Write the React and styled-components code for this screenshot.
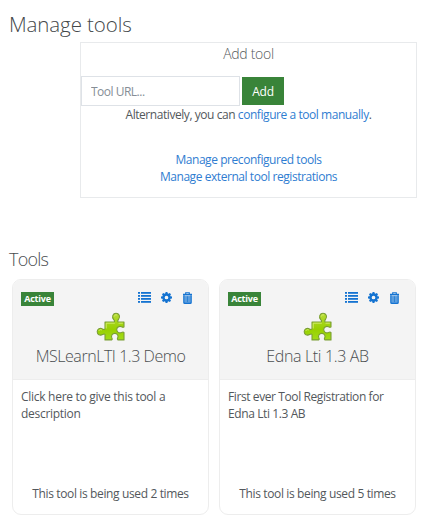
import React from "react";
import styled, { createGlobalStyle } from "styled-components";

const Global = createGlobalStyle`
  * { box-sizing: border-box; }
  body {
    margin: 0;
    background: #fff;
    color: #53585c;
    font-family: "Open Sans", "Noto Sans", sans-serif;
    font-size: 12px;
    line-height: 17px;
    letter-spacing: -0.44px;
  }
`;

const Page = styled.main`
  width: 441px;
  height: 521px;
  padding: 9px 0 0 9px;
  overflow: hidden;
`;

const Title = styled.h1`
  margin: 0;
  height: 33px;
  font-size: 20.5px;
  font-weight: 300;
  line-height: 30px;
  letter-spacing: -0.1px;
  color: #44484a;
`;

const AddPanel = styled.section`
  width: 337px;
  height: 156px;
  margin-left: 71px;
  border: 1px solid #e8eaec;
  text-align: center;
`;

const PanelTitle = styled.h2`
  margin: 0;
  height: 33px;
  font-size: 14px;
  font-weight: 300;
  line-height: 22px;
  letter-spacing: -0.3px;
  color: #55595b;
`;

const AddForm = styled.form`
  display: flex;
  align-items: center;
  gap: 2px;
  height: 30px;
`;

const UrlInput = styled.input`
  width: 159px;
  height: 30px;
  padding: 0 9px;
  border: 1px solid #dee2e7;
  border-radius: 0;
  background: #fff;
  font: inherit;
  letter-spacing: -0.5px;
  &::placeholder { color: #868e96; opacity: 1; }
`;

const AddButton = styled.button`
  width: 42px;
  height: 28px;
  padding: 0;
  border: 0;
  background: #398439;
  color: #fff;
  font: inherit;
  letter-spacing: -0.2px;
`;

const Alternative = styled.p`
  margin: 0 0 28px;
`;

const Link = styled.a`
  color: #2f7dd1;
  text-decoration: none;
`;

const Links = styled.nav`
  display: flex;
  flex-direction: column;
  align-items: center;
`;

const ToolsTitle = styled.h2`
  margin: 49px 0 0;
  height: 32px;
  font-size: 18px;
  font-weight: 300;
  line-height: 25px;
  letter-spacing: -0.8px;
  color: #4a4e50;
`;

const Cards = styled.div`
  display: flex;
  gap: 10px;
  padding-left: 3px;
`;

const Card = styled.article`
  display: flex;
  flex-direction: column;
  width: 197px;
  height: 236px;
  border: 1px solid #ededed;
  border-radius: 9px;
  overflow: hidden;
`;

const CardHeader = styled.header`
  height: 100px;
  padding: 8px 15px 0 8px;
  background: #f4f4f4;
  border-bottom: 1px solid #ededed;
`;

const Toolbar = styled.div`
  display: flex;
  align-items: center;
  justify-content: space-between;
  height: 19px;
`;

const Status = styled.span`
  width: 33px;
  height: 14px;
  margin-top: 2px;
  background: #398439;
  color: #fff;
  font-size: 9px;
  font-weight: 700;
  line-height: 14px;
  letter-spacing: -0.25px;
  text-align: center;
`;

const Actions = styled.div`
  display: flex;
  align-items: center;
  gap: 10px;
  color: #1473d1;
  svg { display: block; }
`;

const ToolIcon = styled.div`
  display: flex;
  justify-content: center;
  height: 34px;
  padding: 5px 0 0 7px;
`;

const ToolName = styled.h3`
  margin: 0 -7px 0 0;
  font-size: 16px;
  font-weight: 300;
  line-height: 30px;
  letter-spacing: ${(p) => p.$spacing};
  text-align: center;
  white-space: nowrap;
  color: #4a4e50;
`;

const Description = styled.p`
  flex: 1;
  margin: 0;
  padding: 8px 28px 0 8px;
  letter-spacing: ${(p) => p.$spacing};
`;

const Usage = styled.footer`
  height: 29px;
  text-align: center;
  letter-spacing: -0.37px;
`;

const ListIcon = () => (
  <svg width="13" height="11" viewBox="0 0 13 11" fill="currentColor">
    {[0, 3, 6, 9].map((y) => (
      <g key={y}>
        <rect x="0" y={y} width="2" height="1.8" />
        <rect x="3" y={y} width="10" height="1.8" />
      </g>
    ))}
  </svg>
);

const GearIcon = () => (
  <svg width="11" height="11" viewBox="0 0 11 11">
    <circle cx="5.5" cy="5.5" r="3" fill="none" stroke="currentColor" strokeWidth="2.3" />
    {[0, 45, 90, 135, 180, 225, 270, 315].map((angle) => (
      <path key={angle} d="M4.2 2 4.600 0h1.800l.4 2z" fill="currentColor" transform={`rotate(${angle} 5.5 5.5)`} />
    ))}
  </svg>
);

const TrashIcon = () => (
  <svg width="11" height="12" viewBox="0 0 11 12" fill="none" stroke="currentColor">
    <path d="M3.7 2V.8h3.600V2" strokeWidth="1.1" />
    <path d="M1 2.500h9" strokeWidth="1.500" />
    <path d="M1.900 3.200v7.200c0 .6.3.9.8.9h5.600c.5 0 .8-.3.8-.9V3.200" fill="#8bb9e6" strokeWidth="1.400" />
    <path d="M4 4.200v6M5.500 4.200v6M7 4.200v6" strokeWidth=".8" />
  </svg>
);

const PuzzleIcon = () => (
  <svg width="30" height="29" viewBox="0 0 30 29">
    <defs>
      <linearGradient id="puzzle" x1="0" y1="0" x2="0" y2="1">
        <stop offset="0" stopColor="#b7dc38" />
        <stop offset=".6" stopColor="#98d000" />
        <stop offset="1" stopColor="#a2dc18" />
      </linearGradient>
    </defs>
    <path
      d="M9 10h9c1-.7.5-1.500-.3-2.400C15.400 4.800 17 1.300 20 1.300s4.800 3.400 2.500 6.100c-.7.9-1.200 1.900-.3 2.600H28v4.800c-.6.8-1.500.4-2.500-.1-2.500-1-4.800.6-4.800 2.900s2.300 4.100 4.800 2.900c1-.6 1.900-.8 2.500.1v7.300h-6.200c-.8-.6-.6-1.200-.1-2 1.100-2.300-.6-4.500-2.900-4.500s-4.100 2.200-2.900 4.500c.5.9.7 1.400-.1 2H9v-5.400c-.6-1-1.400-.5-2.400.1C4 24 1.200 22.500 1.200 19.800s2.700-4.300 5.300-2.800c1.100.7 2 .8 2.500-.2z"
      fill="url(#puzzle)"
      stroke="#7a9e34"
      strokeWidth="1.100"
      strokeLinejoin="round"
    />
    <path d="M10.200 16.500v-5.300h8.600M18.200 4.500c.3-1.300 1.600-2 2.700-1.500M22.500 11.200h4.300M2.700 19c.5-1.300 1.900-1.700 3.200-1" fill="none" stroke="#d4ec70" strokeWidth=".9" />
  </svg>
);

const tools = [
  { name: "MSLearnLTI 1.3 Demo", spacing: "-0.45px", textSpacing: "-0.28px", description: "Click here to give this tool a description", uses: 2 },
  { name: "Edna Lti 1.3 AB", spacing: "-0.35px", textSpacing: "-0.4px", description: "First ever Tool Registration for Edna Lti 1.3 AB", uses: 5 },
];

export default function App() {
  return (
    <>
      <Global />
      <Page>
        <Title>Manage tools</Title>
        <AddPanel>
          <PanelTitle>Add tool</PanelTitle>
          <AddForm>
            <UrlInput placeholder="Tool URL..." aria-label="Tool URL" />
            <AddButton type="button">Add</AddButton>
          </AddForm>
          <Alternative>
            Alternatively, you can <Link href="#">configure a tool manually</Link>.
          </Alternative>
          <Links>
            <Link href="#">Manage preconfigured tools</Link>
            <Link href="#">Manage external tool registrations</Link>
          </Links>
        </AddPanel>
        <ToolsTitle>Tools</ToolsTitle>
        <Cards>
          {tools.map((tool) => (
            <Card key={tool.name}>
              <CardHeader>
                <Toolbar>
                  <Status>Active</Status>
                  <Actions>
                    <ListIcon />
                    <GearIcon />
                    <TrashIcon />
                  </Actions>
                </Toolbar>
                <ToolIcon>
                  <PuzzleIcon />
                </ToolIcon>
                <ToolName $spacing={tool.spacing}>{tool.name}</ToolName>
              </CardHeader>
              <Description $spacing={tool.textSpacing}>{tool.description}</Description>
              <Usage>This tool is being used {tool.uses} times</Usage>
            </Card>
          ))}
        </Cards>
      </Page>
    </>
  );
}
